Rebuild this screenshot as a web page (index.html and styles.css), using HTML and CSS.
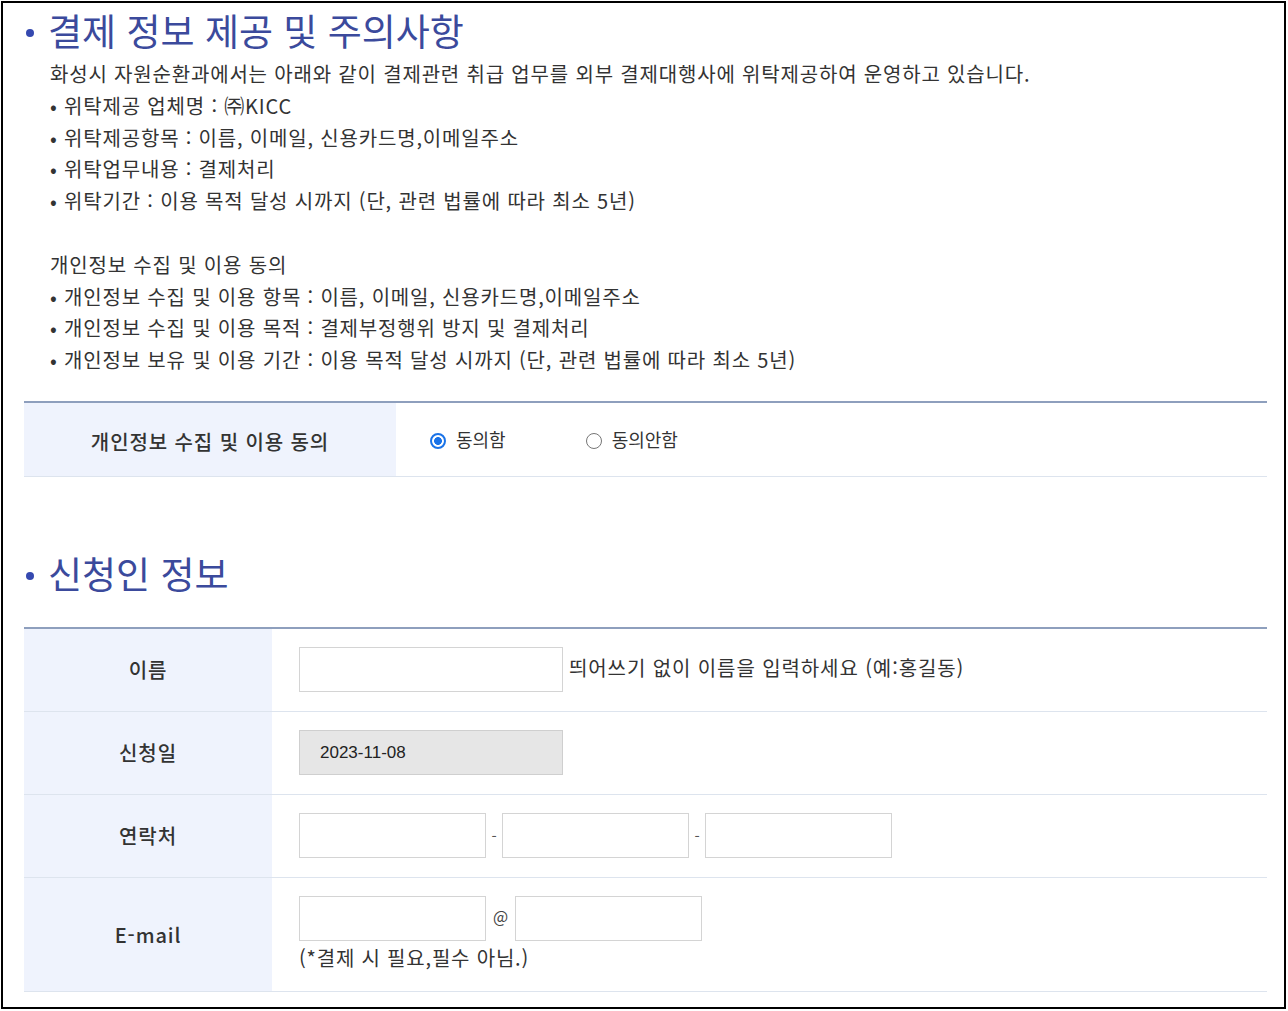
FILE: index.html
```html
<!DOCTYPE html>
<html lang="ko">
<head>
<meta charset="utf-8">
<title>결제 정보</title>
<link rel="stylesheet" href="styles.css">
</head>
<body>
<div class="frame">
  <h2 class="title"><span class="dot"></span>결제 정보 제공 및 주의사항</h2>
  <div class="notice">
    <p>화성시 자원순환과에서는 아래와 같이 결제관련 취급 업무를 외부 결제대행사에 위탁제공하여 운영하고 있습니다.</p>
    <ul>
      <li>• 위탁제공 업체명 : ㈜KICC</li>
      <li>• 위탁제공항목 : 이름, 이메일, 신용카드명,이메일주소</li>
      <li>• 위탁업무내용 : 결제처리</li>
      <li>• 위탁기간 : 이용 목적 달성 시까지 (단, 관련 법률에 따라 최소 5년)</li>
    </ul>
    <p class="gap">개인정보 수집 및 이용 동의</p>
    <ul>
      <li>• 개인정보 수집 및 이용 항목 : 이름, 이메일, 신용카드명,이메일주소</li>
      <li>• 개인정보 수집 및 이용 목적 : 결제부정행위 방지 및 결제처리</li>
      <li>• 개인정보 보유 및 이용 기간 : 이용 목적 달성 시까지 (단, 관련 법률에 따라 최소 5년)</li>
    </ul>
  </div>

  <div class="consent">
    <div class="consent-th">개인정보 수집 및 이용 동의</div>
    <div class="consent-td">
      <label class="radio"><input type="radio" name="agree" checked><span>동의함</span></label>
      <label class="radio"><input type="radio" name="agree"><span>동의안함</span></label>
    </div>
  </div>

  <h2 class="title title2"><span class="dot"></span>신청인 정보</h2>

  <div class="form-table">
    <div class="row">
      <div class="th">이름</div>
      <div class="td">
        <input class="inp inp-lg" type="text">
        <span class="hint">띄어쓰기 없이 이름을 입력하세요 (예:홍길동)</span>
      </div>
    </div>
    <div class="row">
      <div class="th">신청일</div>
      <div class="td">
        <input class="inp inp-lg inp-date" type="text" value="2023-11-08" readonly>
      </div>
    </div>
    <div class="row">
      <div class="th">연락처</div>
      <div class="td">
        <input class="inp inp-sm" type="text">
        <span class="sep">-</span>
        <input class="inp inp-sm" type="text">
        <span class="sep">-</span>
        <input class="inp inp-sm" type="text">
      </div>
    </div>
    <div class="row row-email">
      <div class="th">E-mail</div>
      <div class="td td-col">
        <div class="email-line">
          <input class="inp inp-sm" type="text">
          <span class="at">@</span>
          <input class="inp inp-sm" type="text">
        </div>
        <p class="note">(*결제 시 필요,필수 아님.)</p>
      </div>
    </div>
  </div>
</div>
</body>
</html>
```

FILE: styles.css
```css
html, body {
  margin: 0;
  padding: 0;
  background: #fff;
}

body {
  font-family: "Noto Sans CJK KR", "Noto Sans", sans-serif;
  color: #333;
}

.frame {
  box-sizing: border-box;
  width: 1285px;
  height: 1008px;
  margin: 1px 0 0 1px;
  border: 2px solid #000;
  padding: 2px 17px 0 21px;
  overflow: hidden;
}

.title {
  margin: 0;
  padding-left: 2px;
  display: flex;
  align-items: center;
  gap: 14px;
  font-size: 37px;
  font-weight: 400;
  line-height: 50px;
  color: #3b4a9c;
}

.dot {
  width: 8px;
  height: 8px;
  border-radius: 50%;
  background: #3549b0;
  flex: none;
  margin-top: 6px;
}

.notice {
  margin-top: 3px;
  padding-left: 26px;
  font-size: 20px;
  letter-spacing: 0.82px;
  line-height: 31.8px;
  color: #333;
}

.notice p,
.notice ul {
  margin: 0;
  padding: 0;
  list-style: none;
}

.notice .gap {
  margin-top: 31.8px;
}

.consent {
  margin-top: 25px;
  display: flex;
  height: 76px;
  box-sizing: border-box;
  border-top: 2px solid #8e9fbd;
  border-bottom: 1px solid #dde4ee;
}

.consent-th {
  width: 372px;
  flex: none;
  background: #eff3fd;
  display: flex;
  align-items: center;
  justify-content: center;
  padding-top: 4px;
  box-sizing: border-box;
  font-size: 20px;
  letter-spacing: 0.9px;
  font-weight: 500;
  color: #333;
}

.consent-td {
  flex: 1;
  display: flex;
  align-items: center;
  padding-left: 34px;
  gap: 80px;
  padding-top: 4px;
  box-sizing: border-box;
}

.radio {
  display: flex;
  align-items: center;
  gap: 10px;
  font-size: 18px;
  color: #333;
}

.radio span {
  margin-top: -5px;
}

.radio input {
  appearance: none;
  -webkit-appearance: none;
  margin: 0;
  width: 16px;
  height: 16px;
  border-radius: 50%;
  border: 1px solid #767676;
  background: #fff;
  box-sizing: border-box;
}

.radio input:checked {
  border: 2px solid #1a73e8;
  background: radial-gradient(circle, #1a73e8 0 3.6px, #fff 4.2px);
}

.title2 {
  margin-top: 71px;
}

.form-table {
  margin-top: 29px;
  border-top: 2px solid #8e9fbd;
}

.row {
  display: flex;
  height: 83px;
  box-sizing: border-box;
  border-bottom: 1px solid #dde4ee;
}

.row-email {
  height: 114px;
}

.th {
  width: 248px;
  flex: none;
  background: #eff3fd;
  display: flex;
  align-items: center;
  justify-content: center;
  font-size: 20px;
  letter-spacing: 0.9px;
  font-weight: 500;
  color: #333;
}

.td {
  flex: 1;
  display: flex;
  align-items: center;
  padding-left: 27px;
}

.td-col {
  flex-direction: column;
  align-items: flex-start;
  padding-top: 18px;
}

.inp {
  box-sizing: border-box;
  height: 45px;
  margin: 0;
  border: 1px solid #d4d4d4;
  background: #fff;
  outline: none;
}

.inp-lg {
  width: 264px;
}

.inp-sm {
  width: 187px;
}

.inp-date {
  background: #e6e6e6;
  border-color: #cfcfcf;
  padding: 0 0 0 20px;
  font-family: "Liberation Sans", Arial, sans-serif;
  font-size: 17px;
  color: #222;
}

.hint {
  margin-left: 6px;
  margin-top: -4px;
  font-size: 20px;
  letter-spacing: 0.9px;
  color: #333;
}

.sep {
  width: 16px;
  text-align: center;
  font-size: 15px;
  color: #555;
}

.email-line {
  display: flex;
  align-items: center;
}

.at {
  width: 29px;
  text-align: center;
  font-size: 16px;
  color: #444;
  margin-top: -4px;
}

.note {
  margin: 5px 0 0;
  font-size: 20px;
  letter-spacing: 0.8px;
  line-height: 24px;
  color: #333;
}
```
